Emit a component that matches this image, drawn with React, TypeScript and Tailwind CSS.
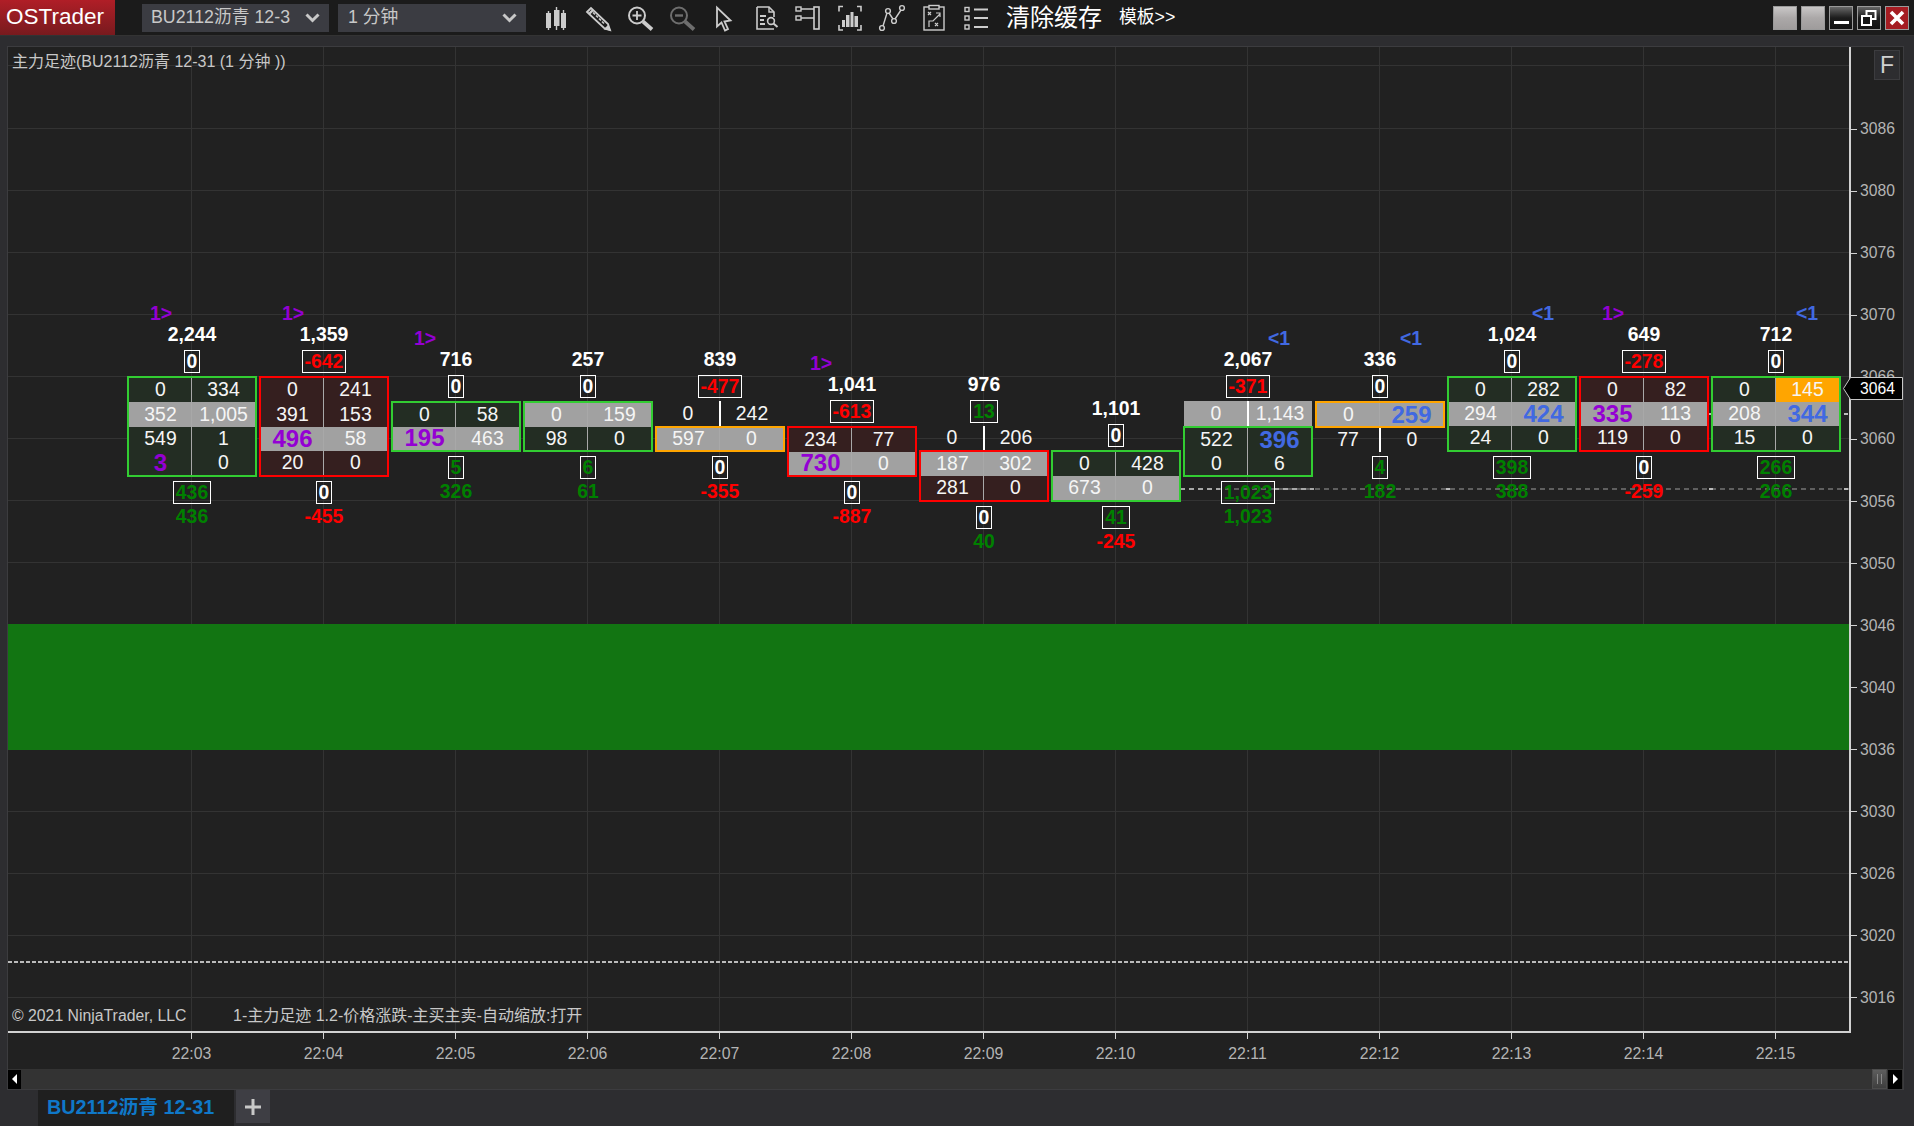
import React from 'react';

const CJK = '[font-family:"Liberation_Sans","Noto_Sans_CJK_SC",sans-serif]';

type Tone = 'green' | 'red' | 'white';
type Val = string | { t: string; c?: 'purple' | 'blue'; bg?: 'orange' };
type Seg = { box: 'green' | 'red' | 'orange' | null; h: number; gray?: number; rows: [Val, Val][] };
type Col = {
  time: string;
  top: number;
  arrow?: 'buy' | 'sell';
  vol: string;
  delta: [string, Tone];
  segs: Seg[];
  under: [string, Tone];
  total: [string, Tone];
};

const p = (t: string) => ({ t, c: 'purple' as const });
const b = (t: string) => ({ t, c: 'blue' as const });

const columns: Col[] = [
  { time: '22:03', top: 376, arrow: 'buy', vol: '2,244', delta: ['0', 'white'], under: ['436', 'green'], total: ['436', 'green'],
    segs: [{ box: 'green', h: 101, gray: 1, rows: [['0', '334'], ['352', '1,005'], ['549', '1'], [p('3'), '0']] }] },
  { time: '22:04', top: 376, arrow: 'buy', vol: '1,359', delta: ['-642', 'red'], under: ['0', 'white'], total: ['-455', 'red'],
    segs: [{ box: 'red', h: 101, gray: 2, rows: [['0', '241'], ['391', '153'], [p('496'), '58'], ['20', '0']] }] },
  { time: '22:05', top: 401, arrow: 'buy', vol: '716', delta: ['0', 'white'], under: ['5', 'green'], total: ['326', 'green'],
    segs: [{ box: 'green', h: 51, gray: 1, rows: [['0', '58'], [p('195'), '463']] }] },
  { time: '22:06', top: 401, vol: '257', delta: ['0', 'white'], under: ['6', 'green'], total: ['61', 'green'],
    segs: [{ box: 'green', h: 51, gray: 0, rows: [['0', '159'], ['98', '0']] }] },
  { time: '22:07', top: 401, vol: '839', delta: ['-477', 'red'], under: ['0', 'white'], total: ['-355', 'red'],
    segs: [{ box: null, h: 25, rows: [['0', '242']] }, { box: 'orange', h: 26, gray: 0, rows: [['597', '0']] }] },
  { time: '22:08', top: 426, arrow: 'buy', vol: '1,041', delta: ['-613', 'red'], under: ['0', 'white'], total: ['-887', 'red'],
    segs: [{ box: 'red', h: 51, gray: 1, rows: [['234', '77'], [p('730'), '0']] }] },
  { time: '22:09', top: 426, vol: '976', delta: ['13', 'green'], under: ['0', 'white'], total: ['40', 'green'],
    segs: [{ box: null, h: 24, rows: [['0', '206']] }, { box: 'red', h: 52, gray: 0, rows: [['187', '302'], ['281', '0']] }] },
  { time: '22:10', top: 450, vol: '1,101', delta: ['0', 'white'], under: ['41', 'green'], total: ['-245', 'red'],
    segs: [{ box: 'green', h: 52, gray: 1, rows: [['0', '428'], ['673', '0']] }] },
  { time: '22:11', top: 401, arrow: 'sell', vol: '2,067', delta: ['-371', 'red'], under: ['1,023', 'green'], total: ['1,023', 'green'],
    segs: [{ box: null, h: 25, gray: 0, rows: [['0', '1,143']] }, { box: 'green', h: 51, rows: [['522', b('396')], ['0', '6']] }] },
  { time: '22:12', top: 401, arrow: 'sell', vol: '336', delta: ['0', 'white'], under: ['4', 'green'], total: ['182', 'green'],
    segs: [{ box: 'orange', h: 27, gray: 0, rows: [['0', b('259')]] }, { box: null, h: 24, rows: [['77', '0']] }] },
  { time: '22:13', top: 376, arrow: 'sell', vol: '1,024', delta: ['0', 'white'], under: ['398', 'green'], total: ['388', 'green'],
    segs: [{ box: 'green', h: 76, gray: 1, rows: [['0', '282'], ['294', b('424')], ['24', '0']] }] },
  { time: '22:14', top: 376, arrow: 'buy', vol: '649', delta: ['-278', 'red'], under: ['0', 'white'], total: ['-259', 'red'],
    segs: [{ box: 'red', h: 76, gray: 1, rows: [['0', '82'], [p('335'), '113'], ['119', '0']] }] },
  { time: '22:15', top: 376, arrow: 'sell', vol: '712', delta: ['0', 'white'], under: ['266', 'green'], total: ['266', 'green'],
    segs: [{ box: 'green', h: 76, gray: 1, rows: [['0', { t: '145', bg: 'orange' }], ['208', b('344')], ['15', '0']] }] },
];

const priceLabels = ['3086', '3080', '3076', '3070', '3066', '3060', '3056', '3050', '3046', '3040', '3036', '3030', '3026', '3020', '3016'];

// page y of the first price line, and the spacing between price lines
const priceY = (i: number) => 128 + i * 62.07;
const CHART_LEFT = 8;
const CHART_TOP = 47;

// stray bright dashes from the other price lines, in page coordinates
const brightTicks = [
  [1709, 413], [1844, 413], [1446, 488], [1709, 488], [1844, 488],
];

const toneText: Record<Tone, string> = {
  green: 'text-[#008000]',
  red: 'text-[#ff0000]',
  white: 'text-white',
};

const boxStyles = {
  green: { border: 'border-2 border-[#32cd32]', fill: 'bg-[#232d23]' },
  red: { border: 'border-2 border-[#ff0000]', fill: 'bg-[#351f1f]' },
  orange: { border: 'border-2 border-[#ffa500]', fill: '' },
};

function Cell({ v }: { v: Val }) {
  const val = typeof v === 'string' ? { t: v } : v;
  const big = 'c' in val && val.c;
  return (
    <div
      className={`flex-1 h-full flex items-center justify-center leading-none ${
        big ? 'text-[24px] font-bold' : 'text-[19.4px] text-[#f5f5f5]'
      } ${'c' in val && val.c === 'purple' ? 'text-[#9400d3]' : ''} ${'c' in val && val.c === 'blue' ? 'text-[#4169e1]' : ''} ${
        'bg' in val && val.bg ? 'bg-[#ffa500]' : ''
      }`}
    >
      {val.t}
    </div>
  );
}

function Segment({ seg }: { seg: Seg }) {
  const style = seg.box ? boxStyles[seg.box] : null;
  return (
    <div className={`flex flex-col ${style ? style.border : 'mx-px'}`} style={{ height: seg.h }}>
      {seg.rows.map((r, i) => {
        const gray = seg.gray === i;
        return (
          <div key={i} className={`relative flex flex-1 min-h-0 ${gray ? 'bg-[#a1a1a1]' : style?.fill ?? ''}`}>
            <Cell v={r[0]} />
            <Cell v={r[1]} />
            <div
              className={`absolute top-0 bottom-0 left-1/2 ${
                seg.box ? 'w-px -ml-px bg-[#a8a8a8]' : 'w-[2px] -ml-px bg-white'
              }`}
            />
          </div>
        );
      })}
    </div>
  );
}

function ValueBox({ v }: { v: [string, Tone] }) {
  return (
    <div className={`h-[23px] px-[2px] border border-white flex items-center font-bold text-[19.4px] leading-none ${toneText[v[1]]}`}>
      {v[0]}
    </div>
  );
}

function FootprintColumn({ col, index }: { col: Col; index: number }) {
  return (
    <div
      className="absolute w-[130px] flex flex-col"
      style={{ left: 127 + index * 132 - CHART_LEFT, top: col.top - 73 - CHART_TOP }}
    >
      <div
        className={`h-[22px] flex items-center px-[23px] font-bold text-[19.4px] leading-none ${
          col.arrow === 'sell' ? 'justify-end text-[#4169e1]' : 'justify-start text-[#9400d3]'
        }`}
      >
        {col.arrow === 'buy' ? '1>' : col.arrow === 'sell' ? '<1' : ''}
      </div>
      <div className="h-[20px] flex items-center justify-center font-bold text-[19.4px] leading-none text-white">{col.vol}</div>
      <div className="mt-[5px] mb-[3px] flex justify-center">
        <ValueBox v={col.delta} />
      </div>
      {col.segs.map((s, i) => (
        <Segment key={i} seg={s} />
      ))}
      <div className="mt-[4px] flex justify-center">
        <ValueBox v={col.under} />
      </div>
      <div className={`mt-[3px] h-[20px] flex items-center justify-center font-bold text-[19.4px] leading-none ${toneText[col.total[1]]}`}>
        {col.total[0]}
      </div>
    </div>
  );
}

const I = ({ children }: { children: React.ReactNode }) => (
  <svg width="30" height="30" viewBox="0 0 30 30" fill="none" stroke="#cccccc" strokeWidth="1.4" className="shrink-0">
    {children}
  </svg>
);

function ToolIcons() {
  return (
    <div className="ml-[15px] flex items-center gap-[12px]">
      <I>
        <path d="M7.5 8v19M15.5 4v23M22.5 7v20" />
        <rect x="5" y="10" width="5" height="15" fill="#cccccc" stroke="none" />
        <rect x="13" y="7" width="5.5" height="16" fill="#cccccc" stroke="none" />
        <rect x="20" y="10" width="5" height="15" fill="#cccccc" stroke="none" />
      </I>
      <I>
        <path d="M4 9l4-4 17 16 2 6-6-2z" strokeWidth="1.8" />
        <path d="M6 11l4-4" strokeWidth="2.4" />
        <path d="M10 9.5l2 2M13 12.5l2 2M16 15.5l2 2M19 18.5l2 2" strokeWidth="1.6" />
        <path d="M22 26l3-3 2 4z" fill="#cccccc" />
      </I>
      <I>
        <circle cx="12" cy="12.5" r="8" strokeWidth="2" />
        <path d="M7.5 12.5h9M12 8v9" strokeWidth="1.8" />
        <path d="M18 18.5l9 8" strokeWidth="3.8" />
      </I>
      <I>
        <g stroke="#6e6e6e">
          <circle cx="12" cy="12.5" r="8" strokeWidth="2" />
          <path d="M8 12.5h8" strokeWidth="2.4" />
          <path d="M18 18.5l9 8" strokeWidth="3.8" />
        </g>
      </I>
      <I>
        <path d="M8 4.5l0 19 4.5-4 3.5 8 3-1.5-3.5-7.5 6-1z" strokeWidth="1.8" />
      </I>
      <I>
        <path d="M6 4h12l5 5v5M6 4v22h17" strokeWidth="1.6" />
        <path d="M18 4v5h5" />
        <path d="M9 13h6M9 17h4M9 21h5" strokeWidth="1.8" />
        <circle cx="20" cy="18" r="3.4" strokeWidth="1.6" />
        <path d="M22.5 20.5l4 3.5" strokeWidth="2" />
      </I>
      <I>
        <rect x="3" y="4" width="5" height="4" />
        <rect x="3" y="13" width="5" height="4" />
        <path d="M8 6h13M8 15h13" />
        <rect x="21" y="4" width="5" height="22" strokeWidth="1.6" />
      </I>
      <I>
        <path d="M8 3.5H4v5M22 3.5h4v5M4 22v5h4M26 22v5h-4" strokeWidth="1.6" />
        <rect x="7" y="17" width="3" height="7" fill="#cccccc" stroke="none" />
        <rect x="11" y="12" width="3.5" height="12" fill="#cccccc" stroke="none" />
        <rect x="15.5" y="9" width="3" height="15" fill="#cccccc" stroke="none" />
        <rect x="19.5" y="13" width="3.5" height="11" fill="#cccccc" stroke="none" />
      </I>
      <I>
        <circle cx="5" cy="25" r="2.4" />
        <circle cx="11" cy="8" r="2.4" />
        <circle cx="17" cy="18" r="2.4" />
        <circle cx="25" cy="5" r="2.4" />
        <path d="M6 23l4-13M12 10l4 6M18 16l6-9" />
      </I>
      <I>
        <rect x="5" y="4" width="20" height="23" />
        <rect x="10" y="2.5" width="10" height="3.5" fill="#1b1b1b" />
        <path d="M9 9l3 3M12 9l-3 3M10 24v-6h4l7-7M17 10h4v4M16 20l3 3M19 20l-3 3" strokeWidth="1.2" />
      </I>
      <I>
        <rect x="4" y="4.5" width="4" height="4" />
        <rect x="4" y="13" width="4" height="4" />
        <rect x="4" y="22" width="4" height="4" />
        <path d="M13 6.5h14M13 15h14M13 24h14" strokeWidth="2" />
      </I>
    </div>
  );
}

function Chevron() {
  return (
    <svg width="15" height="10" viewBox="0 0 15 10" fill="none" stroke="#c8c8c8" strokeWidth="3" className="shrink-0">
      <path d="M1.5 1.5l6 6 6-6" />
    </svg>
  );
}

function WindowButtons() {
  const frame = 'w-[24px] h-[24px] border border-[#9a9a9a] flex items-center justify-center';
  return (
    <div className="ml-auto mr-[5px] flex gap-[4px]">
      <div className={`${frame} bg-gradient-to-b from-[#c9c7c7] via-[#aba8a8] to-[#9f9c9c]`} />
      <div className={`${frame} bg-gradient-to-b from-[#c9c7c7] via-[#aba8a8] to-[#9f9c9c]`} />
      <div className={`${frame} items-end pb-[5px] bg-gradient-to-b from-[#6a6a6a] via-[#1c1c1c] to-[#111111]`}>
        <div className="w-[15px] h-[3px] bg-white" />
      </div>
      <div className={`${frame} bg-gradient-to-b from-[#666666] via-[#1c1c1c] to-[#111111]`}>
        <svg width="18" height="18" viewBox="0 0 18 18" fill="none" stroke="white" strokeWidth="2">
          <rect x="6.5" y="2" width="9" height="8" />
          <rect x="2" y="7" width="9" height="9" fill="#151515" />
        </svg>
      </div>
      <div className={`${frame} bg-[#a51c22]`}>
        <svg width="16" height="16" viewBox="0 0 16 16" stroke="white" strokeWidth="3.6">
          <path d="M2 2l12 12M14 2L2 14" />
        </svg>
      </div>
    </div>
  );
}

export default function App() {
  const w = 'text-[#c8c8c8]';
  return (
    <div className={`w-[1914px] h-[1126px] overflow-hidden flex flex-col bg-[#2d2d30] ${CJK}`}>
      {/* toolbar */}
      <div className="h-[36px] shrink-0 flex items-center bg-[#1b1b1b] border-b border-[#333333]">
        <div className="w-[115px] h-full flex items-center pl-[6px] text-[22.5px] leading-none text-white bg-gradient-to-b from-[#b01e27] to-[#781a1e]">
          OSTrader
        </div>
        <div className={`ml-[27px] w-[187px] h-[28px] flex items-center pl-[9px] pr-[9px] bg-[#3b3c42] text-[17.8px] leading-none ${w}`}>
          <span className="whitespace-nowrap">BU2112沥青 12-3</span>
          <span className="ml-auto"><Chevron /></span>
        </div>
        <div className={`ml-[9px] w-[188px] h-[28px] flex items-center pl-[10px] pr-[9px] bg-[#3b3c42] text-[17.8px] leading-none ${w}`}>
          <span>1 分钟</span>
          <span className="ml-auto"><Chevron /></span>
        </div>
        <ToolIcons />
        <span className="ml-[15px] text-[24px] leading-none text-white whitespace-nowrap">清除缓存</span>
        <span className="ml-[17px] text-[17.8px] leading-none text-white whitespace-nowrap">模板&gt;&gt;</span>
        <WindowButtons />
      </div>

      {/* chart panel */}
      <div className="mt-[10px] ml-[7px] mr-[10px] h-[1044px] shrink-0 flex flex-col border border-[#3c3c3f] bg-[#212121]">
        <div className="flex-1 min-h-0 flex">
          <div className="relative flex-1 overflow-hidden border-r-2 border-b-2 border-[#d2d2d2]">
            {/* grid */}
            {columns.map((_, i) => (
              <div key={i} className="absolute top-0 bottom-0 w-px bg-[#333333]" style={{ left: 191 + i * 132 - CHART_LEFT }} />
            ))}
            <div className="absolute left-0 right-0 h-px bg-[#333333]" style={{ top: 65 - CHART_TOP }} />
            {priceLabels.map((_, i) => (
              <div key={i} className="absolute left-0 right-0 h-px bg-[#333333]" style={{ top: priceY(i) - CHART_TOP }} />
            ))}

            {/* zone and price lines */}
            <div className="absolute left-0 right-0 top-[577px] h-[126px] bg-[#127512]" />
            <div className="absolute left-0 right-0 top-[914px] h-[2px] bg-[repeating-linear-gradient(90deg,#bbbbbb_0_4px,transparent_4px_6px)]" />
            <div className="absolute left-[1172px] right-0 top-[441px] h-[2px] bg-[repeating-linear-gradient(90deg,#5f5f5f_0_5px,transparent_5px_9px)]" />
            <div className="absolute left-[1172px] w-[40px] top-[441px] h-[2px] bg-[repeating-linear-gradient(90deg,#a8a8a8_0_5px,transparent_5px_9px)]" />
            <div className="absolute left-[1266px] w-[40px] top-[441px] h-[2px] bg-[repeating-linear-gradient(90deg,#a8a8a8_0_5px,transparent_5px_9px)]" />
            {brightTicks.map(([x, y]) => (
              <div key={`${x}-${y}`} className="absolute w-[4px] h-[2px] bg-[#bbbbbb]" style={{ left: x - CHART_LEFT, top: y - CHART_TOP }} />
            ))}

            {columns.map((c, i) => (
              <FootprintColumn key={c.time} col={c} index={i} />
            ))}

            <div className="absolute left-[4px] top-[6px] text-[16px] leading-[18px] text-[#c8c8c8] whitespace-nowrap">
              主力足迹(BU2112沥青 12-31 (1 分钟 ))
            </div>
            <div className="absolute left-[4px] top-[960px] flex text-[15.8px] leading-[18px] text-[#c8c8c8] whitespace-nowrap">
              <span className="w-[221px]">© 2021 NinjaTrader, LLC</span>
              <span className="text-[16px]">1-主力足迹 1.2-价格涨跌-主买主卖-自动缩放:打开</span>
            </div>
          </div>

          {/* price axis */}
          <div className="relative w-[52px] shrink-0">
            {priceLabels.map((l, i) => (
              <div
                key={l}
                className="absolute left-0 flex items-center h-[18px] -mt-[9px] text-[15.7px] leading-none text-[#b4b4b4]"
                style={{ top: priceY(i) - CHART_TOP + 1 }}
              >
                <div className="w-[6px] h-px bg-[#d2d2d2] mr-[3px]" />
                {l}
              </div>
            ))}
            <div className="absolute left-[23px] right-[3px] top-[3px] h-[30px] flex items-center justify-center border border-[#3c3c3f] bg-[#2d2d30] text-[23px] leading-none text-[#d0d0d0]">
              F
            </div>
            {/* last price tag */}
            <div className="absolute -left-[8px] top-[330px] w-[60px] h-[23px] flex items-center justify-end pr-[8px] text-[15.7px] leading-none text-white">
              <svg width="60" height="23" viewBox="0 0 60 23" className="absolute left-0 top-0">
                <path d="M0.5 11.5L7.5 0.5H59.5V22.5H7.5z" fill="#000000" stroke="#c8c8c8" />
              </svg>
              <span className="relative">3064</span>
            </div>
          </div>
        </div>

        {/* time axis */}
        <div className="relative h-[36px] shrink-0">
          {columns.map((c, i) => (
            <div
              key={c.time}
              className="absolute top-0 w-[60px] flex flex-col items-center text-[15.8px] leading-none text-[#b4b4b4]"
              style={{ left: 191 + i * 132 - CHART_LEFT - 29.5 }}
            >
              <div className="w-px h-[6px] bg-[#d2d2d2] mb-[7px]" />
              {c.time}
            </div>
          ))}
        </div>

        {/* scrollbar */}
        <div className="h-[20px] shrink-0 flex items-center bg-[#333333]">
          <div className="w-[13px] h-[19px] flex items-center justify-center bg-black">
            <div className="w-0 h-0 border-y-[5px] border-y-transparent border-r-[5px] border-r-white" />
          </div>
          <div className="ml-auto w-[15px] h-[20px] flex items-center justify-center gap-[3px] bg-gradient-to-b from-[#5e5e5e] to-[#3e3e3e] border border-[#4c4c4c]">
            <div className="w-px h-[10px] bg-[#888888]" />
            <div className="w-px h-[10px] bg-[#888888]" />
          </div>
          <div className="ml-px mr-px w-[14px] h-[19px] flex items-center justify-center bg-black">
            <div className="w-0 h-0 border-y-[5px] border-y-transparent border-l-[5px] border-l-white" />
          </div>
        </div>
      </div>

      {/* tabs */}
      <div className="flex-1 flex items-start pl-[38px]">
        <div className="w-[196px] h-[37px] flex items-center pl-[9px] pb-[2px] bg-[#1f1f1f] text-[19.8px] font-bold leading-none text-[#0f78c8] whitespace-nowrap">
          BU2112沥青 12-31
        </div>
        <div className="ml-[2px] w-[34px] h-[33px] flex items-center justify-center bg-[#3e3e44]">
          <svg width="16" height="16" viewBox="0 0 16 16" stroke="#c8c8c8" strokeWidth="3">
            <path d="M8 0v16M0 8h16" />
          </svg>
        </div>
      </div>
    </div>
  );
}
